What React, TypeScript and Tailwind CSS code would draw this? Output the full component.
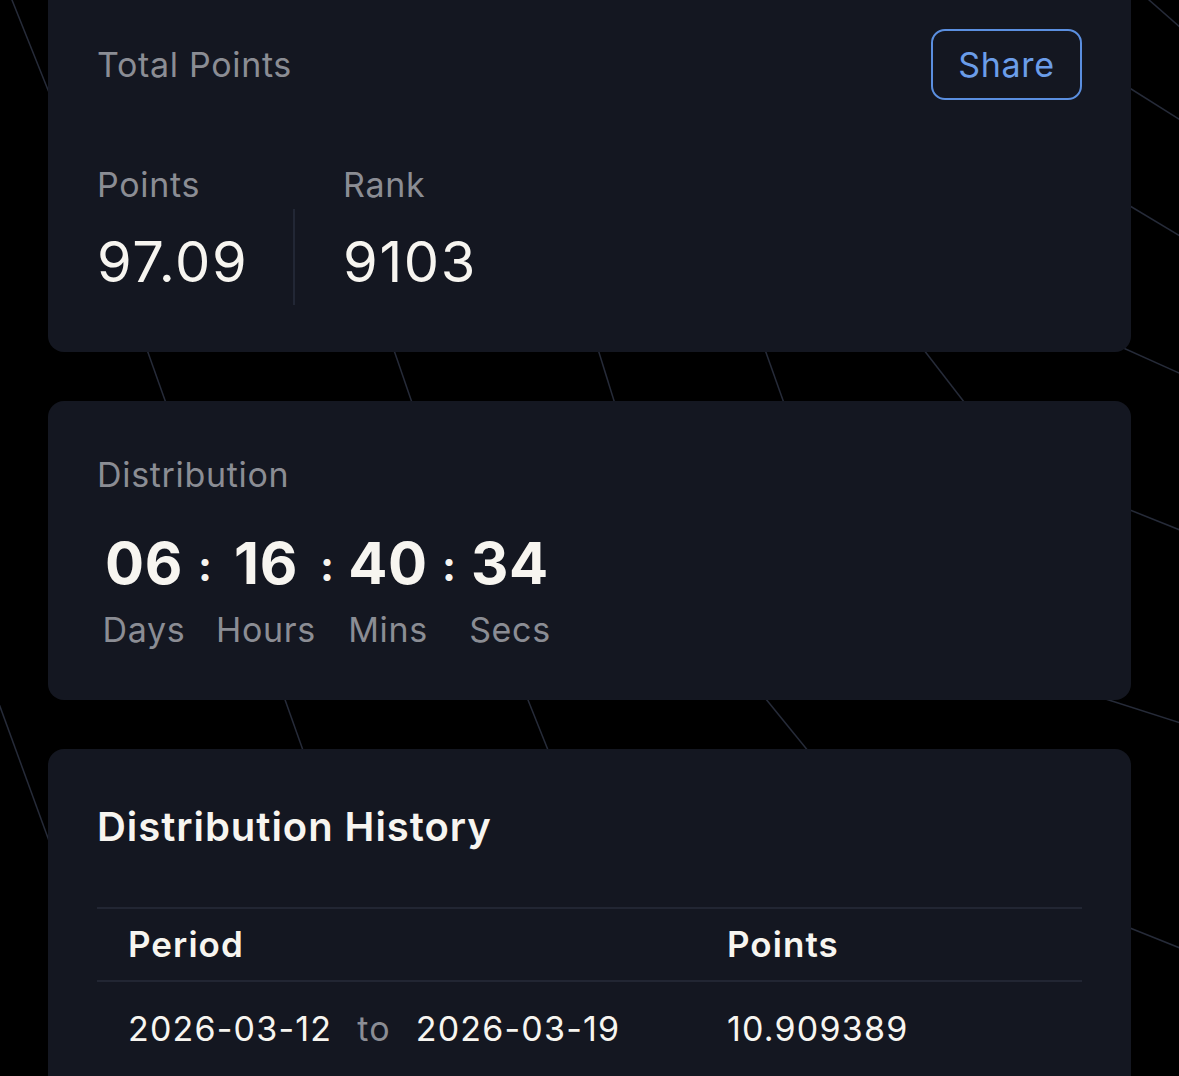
import React from "react";

const lines: [number, number, number, number][] = [
  [8, -10, 60, 120],
  [1140, -8, 1190, 36],
  [1120, 82, 1190, 126],
  [1120, 200, 1190, 242],
  [140, 330, 172, 420],
  [387, 330, 418, 420],
  [592, 330, 620, 420],
  [758, 330, 790, 420],
  [910, 332, 978, 420],
  [1110, 342, 1190, 378],
  [1120, 506, 1190, 534],
  [278, 680, 310, 770],
  [520, 680, 556, 770],
  [752, 682, 822, 768],
  [1090, 694, 1190, 726],
  [-6, 690, 56, 860],
  [1120, 924, 1190, 952],
];

function Background() {
  return (
    <svg
      className="absolute inset-0 h-full w-full"
      viewBox="0 0 1179 1076"
      preserveAspectRatio="none"
    >
      {lines.map(([x1, y1, x2, y2], i) => (
        <line
          key={i}
          x1={x1}
          y1={y1}
          x2={x2}
          y2={y2}
          stroke="#262b39"
          strokeWidth="1.5"
        />
      ))}
    </svg>
  );
}

function Unit({ value, label }: { value: string; label: string }) {
  return (
    <div className="flex w-[94px] flex-col items-center">
      <div className="text-[58px] font-bold leading-[70px] tracking-[0.01em] text-[#f7f5f0]">{value}</div>
      <div className="mt-[6px] text-[34px] leading-[51px] tracking-[0.02em] text-[#8b8d94]">{label}</div>
    </div>
  );
}

function Colon() {
  return (
    <div className="flex h-[70px] w-[28px] items-center justify-center pt-[6px] text-[42px] font-bold leading-none text-[#f7f5f0]">
      :
    </div>
  );
}

export default function App() {
  return (
    <div className="relative h-[1076px] w-[1179px] overflow-hidden bg-black font-['Inter','Noto_Sans',sans-serif]">
      <Background />
      <div className="relative z-10 flex flex-col gap-[49px] px-[48px]">
        {/* Total Points card */}
        <div className="rounded-b-[16px] bg-[#141721] px-[49px] pb-[47px] pt-[29px]">
          <div className="flex items-center justify-between">
            <div className="text-[34px] leading-[51px] tracking-[0.02em] text-[#8b8d94]">Total Points</div>
            <button className="h-[71px] w-[151px] rounded-[14px] border-2 border-[#5b8fe0] text-[34px] leading-none tracking-[0.02em] text-[#6b9de9]">
              Share
            </button>
          </div>
          <div className="mt-[59px] flex items-end">
            <div className="flex w-[196px] flex-col">
              <div className="text-[34px] leading-[51px] tracking-[0.02em] text-[#8b8d94]">Points</div>
              <div className="pt-[10px] text-[56px] leading-[85px] tracking-[0.03em] text-[#f7f5f0]">97.09</div>
            </div>
            <div className="h-[96px] w-[2px] bg-[#222735]" />
            <div className="flex flex-col pl-[48px]">
              <div className="text-[34px] leading-[51px] tracking-[0.02em] text-[#8b8d94]">Rank</div>
              <div className="pt-[10px] text-[56px] leading-[85px] tracking-[0.03em] text-[#f7f5f0]">9103</div>
            </div>
          </div>
        </div>

        {/* Distribution card */}
        <div className="rounded-[16px] bg-[#141721] px-[49px] pb-[45px] pt-[48px]">
          <div className="text-[34px] leading-[51px] tracking-[0.02em] text-[#8b8d94]">Distribution</div>
          <div className="mt-[28px] flex items-start">
            <Unit value="06" label="Days" />
            <Colon />
            <Unit value="16" label="Hours" />
            <Colon />
            <Unit value="40" label="Mins" />
            <Colon />
            <Unit value="34" label="Secs" />
          </div>
        </div>

        {/* Distribution History card */}
        <div className="rounded-[16px] bg-[#141721] px-[49px] pb-[40px] pt-[48px]">
          <div className="text-[40px] font-semibold leading-[60px] tracking-[0.024em] text-[#f7f5f0]">
            Distribution History
          </div>
          <div className="mt-[50px] border-t-2 border-[#222633]">
            <div className="grid h-[73px] grid-cols-[630px_1fr] items-center border-b-2 border-[#222633]">
              <div className="pl-[31px] text-[35px] font-semibold leading-none tracking-[0.03em] text-[#f7f5f0]">Period</div>
              <div className="text-[35px] font-semibold leading-none tracking-[0.03em] text-[#f7f5f0]">Points</div>
            </div>
            <div className="grid grid-cols-[630px_1fr] py-[30px]">
              <div className="flex items-center pl-[31px] text-[34px] leading-none tracking-[0.035em] text-[#f7f5f0]">
                <span>2026-03-12</span>
                <span className="px-[25px] text-[#8b8d94]">to</span>
                <span>2026-03-19</span>
              </div>
              <div className="text-[34px] leading-none tracking-[0.035em] text-[#f7f5f0]">10.909389</div>
            </div>
          </div>
        </div>
      </div>
    </div>
  );
}
